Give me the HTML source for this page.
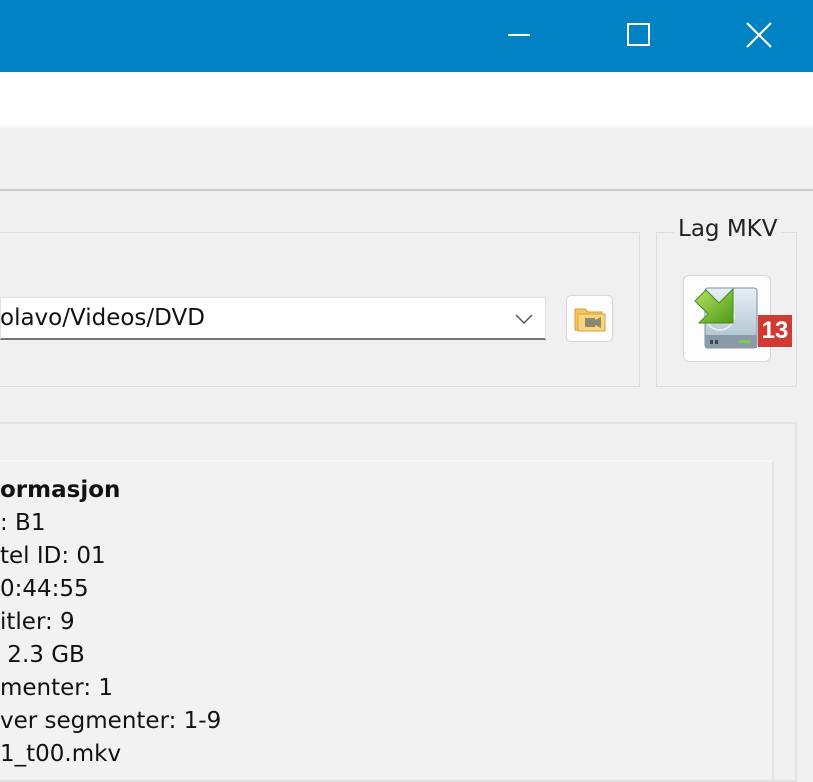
<!DOCTYPE html>
<html><head><meta charset="utf-8"><style>
*{margin:0;padding:0;box-sizing:border-box}
body{width:813px;height:767px;overflow:hidden;background:#f0f0f0;font-family:"DejaVu Sans",sans-serif;position:relative}
.a{position:absolute}
.t{font-size:23px;color:#111;line-height:33px;white-space:pre}
</style></head><body>
<div class="a" style="left:0;top:0;width:813px;height:72px;background:#0082c4"></div>
<div class="a" style="left:508px;top:34px;width:22px;height:2px;background:#fff"></div>
<div class="a" style="left:627px;top:23px;width:23px;height:23px;border:2px solid #fff"></div>
<svg class="a" style="left:746px;top:22px" width="26" height="26"><path d="M1 1L25 25M25 1L1 25" stroke="#fff" stroke-width="2.2"/></svg>
<div class="a" style="left:0;top:72px;width:813px;height:53px;background:#fff"></div>
<div class="a" style="left:0;top:125px;width:813px;height:3px;background:#f8f8f8"></div>
<div class="a" style="left:0;top:189px;width:813px;height:2px;background:#c8c8c8"></div>

<div class="a" style="left:-2px;top:232px;width:642px;height:155px;border:1px solid #dcdcdc"></div>
<div class="a" style="left:656px;top:232px;width:141px;height:155px;border:1px solid #dcdcdc"></div>
<div class="a" style="left:674px;top:216px;padding:0 4px;background:#f0f0f0;font-size:23px;color:#222">Lag MKV</div>

<div class="a" style="left:0;top:297px;width:546px;height:43px;background:#fff;border:1px solid #e0e0e0;border-bottom:2px solid #777"></div>
<div class="a t" style="left:0;top:302px">olavo/Videos/DVD</div>
<svg class="a" style="left:515px;top:313px" width="18" height="12"><path d="M1 2L9 10L17 2" stroke="#555" stroke-width="1.5" fill="none"/></svg>
<div class="a" style="left:566px;top:295px;width:47px;height:47px;background:#fdfdfd;border:1px solid #d6d6d6;border-radius:5px"></div>
<svg class="a" style="left:573px;top:305px" width="34" height="28"><path d="M2 4h10l3 3h14v18H2z" fill="#f3c660" stroke="#d89a30"/><rect x="5" y="9" width="27" height="17" fill="#f8d57a" stroke="#e0a040"/><rect x="12" y="13" width="10" height="9" fill="#8a8a70"/><path d="M22 15l6-3v11l-6-3z" fill="#8a8a70"/></svg>

<div class="a" style="left:683px;top:275px;width:88px;height:87px;background:#fdfdfd;border:1px solid #d8d8d8;border-radius:6px"></div>
<svg class="a" style="left:693px;top:285px" width="70" height="70">
<defs><linearGradient id="g" x1="0" y1="0" x2="0" y2="1"><stop offset="0" stop-color="#e8f0f6"/><stop offset="1" stop-color="#a8bccc"/></linearGradient><linearGradient id="gr" x1="0" y1="0" x2="1" y2="1"><stop offset="0" stop-color="#b8e060"/><stop offset="1" stop-color="#4c9a18"/></linearGradient></defs>
<rect x="12" y="3" width="52" height="60" rx="3" fill="url(#g)" stroke="#7890a4"/>
<path d="M40 26a14 14 0 1 1 -18 -8" stroke="#fff" stroke-width="1.5" fill="none" opacity=".7"/>
<rect x="12" y="50" width="52" height="13" fill="#8a9aa8"/>
<rect x="17" y="55" width="3" height="4" fill="#445"/><rect x="22" y="55" width="3" height="4" fill="#445"/>
<rect x="46" y="55" width="12" height="3" fill="#7ccc44"/>
<path d="M40 4L40 38L6 38L15 29L2 16L13 5L26 18Z" fill="url(#gr)" stroke="#4a8a18"/>
</svg>
<div class="a" style="left:758px;top:315px;width:34px;height:32px;background:#cf3a33;color:#fff;font-size:24px;font-weight:bold;line-height:32px;text-align:center;font-family:'Liberation Sans',sans-serif">13</div>

<div class="a" style="left:-2px;top:422px;width:799px;height:360px;border:2px solid #e2e2e2;border-left:none"></div>
<div class="a" style="left:0;top:460px;width:774px;height:320px;background:#f2f2f2;border-right:2px solid #e4e4e4;border-top:2px solid #f6f6f6"></div>
<div class="a t" style="left:0;top:474px;font-weight:bold">ormasjon</div>
<div class="a t" style="left:0;top:507px">: B1</div>
<div class="a t" style="left:0;top:540px">tel ID: 01</div>
<div class="a t" style="left:0;top:573px">0:44:55</div>
<div class="a t" style="left:0;top:606px">itler: 9</div>
<div class="a t" style="left:0;top:639px"> 2.3 GB</div>
<div class="a t" style="left:0;top:672px">menter: 1</div>
<div class="a t" style="left:0;top:705px">ver segmenter: 1-9</div>
<div class="a t" style="left:0;top:738px">1_t00.mkv</div>
</body></html>
